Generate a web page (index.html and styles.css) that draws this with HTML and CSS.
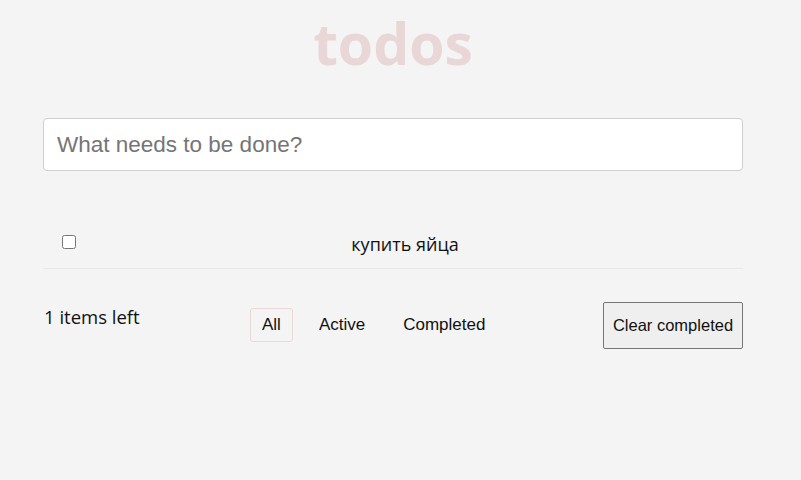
FILE: index.html
```html
<!DOCTYPE html>
<html>
<head>
<meta charset="utf-8">
<link rel="stylesheet" href="styles.css">
</head>
<body>
<div class="app">
  <h1 class="title">todos</h1>
  <input class="new-todo" type="text" placeholder="What needs to be done?">
  <ul class="list">
    <li class="item">
      <input class="toggle" type="checkbox">
      <span class="label">купить яйца</span>
    </li>
  </ul>
  <div class="footer">
    <span class="count">1 items left</span>
    <div class="filters">
      <button class="filter selected">All</button>
      <button class="filter">Active</button>
      <button class="filter">Completed</button>
    </div>
    <button class="clear">Clear completed</button>
  </div>
</div>
</body>
</html>
```
FILE: styles.css
```css
html, body {
  margin: 0;
  padding: 0;
  background: #f4f4f4;
}
.app {
  width: 700px;
  margin-left: 43px;
  font-family: "Open Sans", sans-serif;
}
.title {
  margin: 0;
  padding-top: 8px;
  height: 110px;
  text-align: center;
  font-size: 57px;
  font-weight: 700;
  color: #e9d6d7;
  line-height: 70px;
  box-sizing: border-box;
}
.new-todo {
  display: block;
  box-sizing: border-box;
  width: 700px;
  height: 53px;
  margin: 8px 0 0 0;
  padding: 0 13px;
  border: 1px solid #cfcfcf;
  border-radius: 4px;
  background: #fff;
  font-family: "Liberation Sans", Arial, sans-serif;
  font-size: 22.5px;
  outline: none;
}
.new-todo::placeholder {
  color: #757575;
}
.list {
  list-style: none;
  margin: 48px 0 0 0;
  padding: 0;
}
.item {
  position: relative;
  height: 49px;
  display: flex;
  align-items: center;
  justify-content: center;
  border-bottom: 1px solid #e8e8e8;
}
.toggle {
  position: absolute;
  left: 19px;
  top: 16px;
  width: 14px;
  height: 14px;
  margin: 0;
}
.label {
  font-size: 18px;
  color: #111;
  margin-left: 24px;
}
.footer {
  display: flex;
  align-items: flex-start;
  margin-top: 33px;
}
.count {
  font-size: 18.5px;
  color: #111;
  width: 206px;
  margin-left: 1px;
  margin-top: 2px;
}
.filters {
  display: flex;
  margin-top: 6px;
}
.filter {
  font-family: "Liberation Sans", Arial, sans-serif;
  font-size: 17px;
  color: #111;
  background: transparent;
  border: 1px solid transparent;
  border-radius: 3px;
  height: 34px;
  padding: 0 11px;
  margin-right: 14px;
}
.filter.selected {
  border-color: #ead7d8;
}
.clear {
  margin-left: auto;
  font-family: "Liberation Sans", Arial, sans-serif;
  font-size: 16.5px;
  color: #111;
  background: #efefef;
  border: 1px solid #767676;
  border-radius: 2px;
  height: 47px;
  width: 140px;
  padding: 0;
}
```
